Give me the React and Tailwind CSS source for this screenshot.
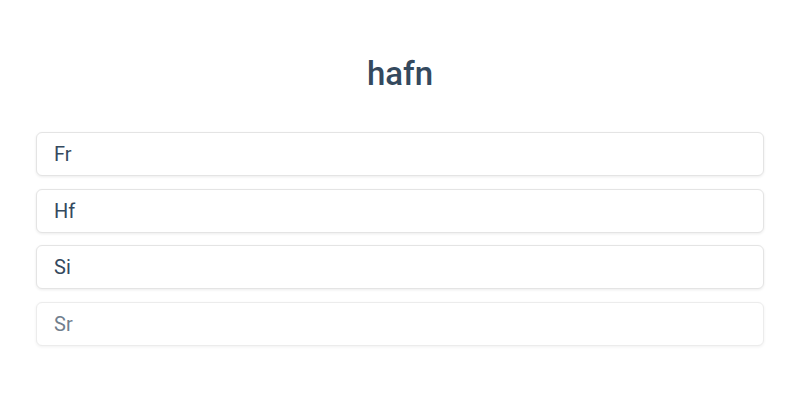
export default function App() {
  const items = ["Fr", "Hf", "Si", "Sr"];
  return (
    <div className="w-[800px] h-[400px] bg-white px-[36px] pt-[52px] font-['Roboto',sans-serif] text-[#34495e]">
      <h1 className="text-center text-[33px] leading-[44px] font-medium">hafn</h1>
      <div className="mt-[36px] flex flex-col gap-[12.67px]">
        {items.map((it, i) => (
          <div
            key={it}
            className={`h-[44px] flex items-center px-[17px] rounded-[6px] bg-white border border-[#e4e4e4] shadow-[0_1px_3px_rgba(0,0,0,0.08)] text-[20px] ${i === 3 ? "opacity-70" : ""}`}
          >
            {it}
          </div>
        ))}
      </div>
    </div>
  );
}
